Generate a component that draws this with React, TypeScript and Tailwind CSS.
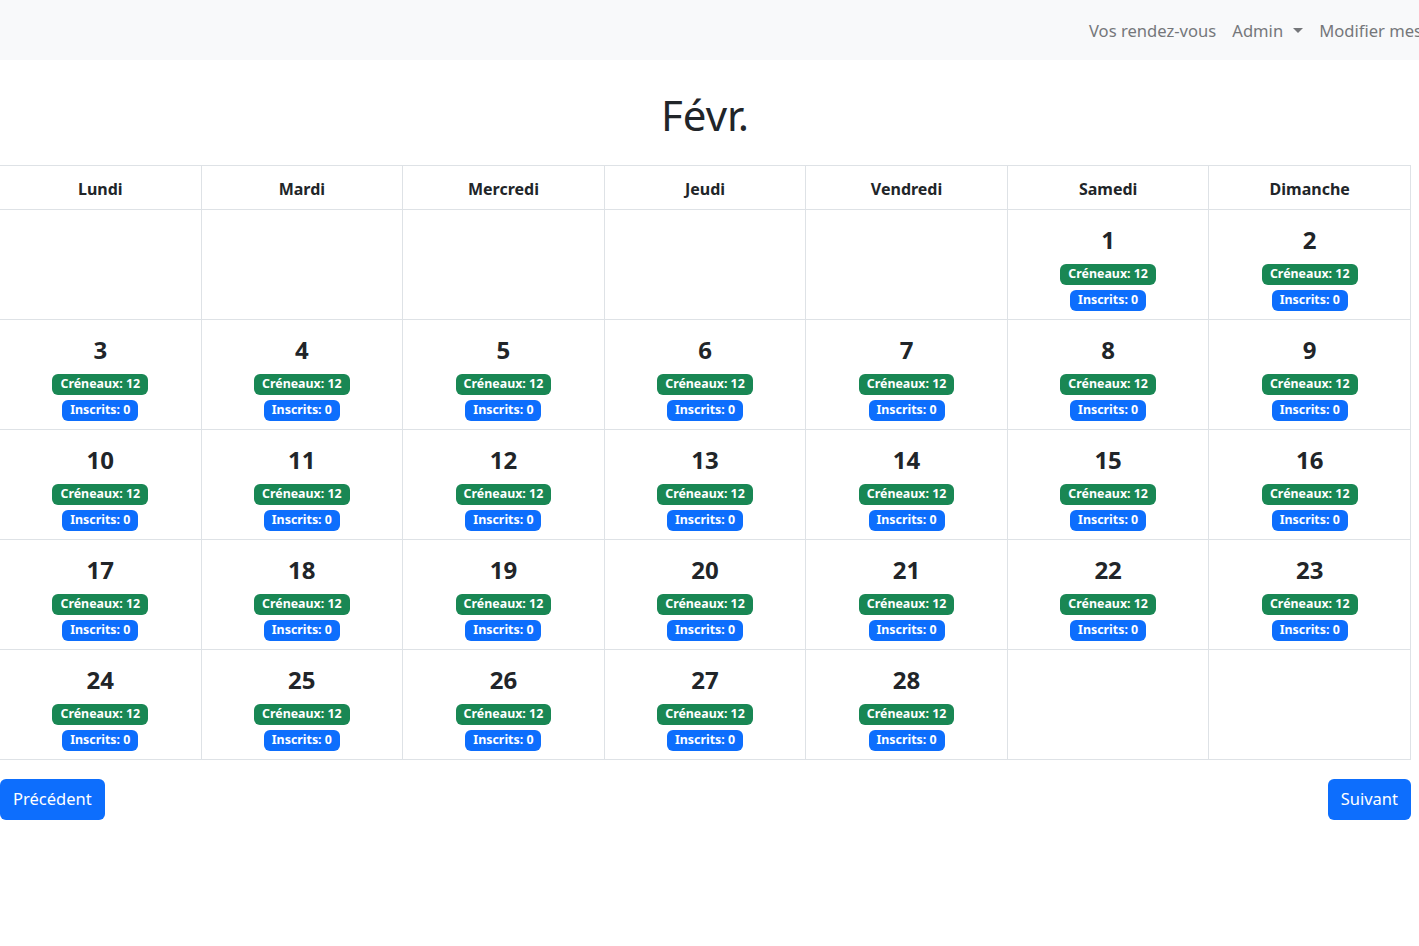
import React from "react";

const days = ["Lundi", "Mardi", "Mercredi", "Jeudi", "Vendredi", "Samedi", "Dimanche"];

function buildWeeks(): (number | null)[][] {
  const cells: (number | null)[] = [null, null, null, null, null];
  for (let d = 1; d <= 28; d++) cells.push(d);
  while (cells.length % 7 !== 0) cells.push(null);
  const weeks: (number | null)[][] = [];
  for (let i = 0; i < cells.length; i += 7) weeks.push(cells.slice(i, i + 7));
  return weeks;
}

const font = { fontFamily: '"Noto Sans", "Open Sans", "Liberation Sans", sans-serif' };

export default function App() {
  const weeks = buildWeeks();
  return (
    <div className="w-[1419px] min-h-[946px] bg-white text-[#212529] overflow-hidden" style={font}>
      <nav className="h-[60px] bg-[#f8f9fa] overflow-hidden">
        <div className="flex items-center h-full pt-[2px] ml-[1081px] whitespace-nowrap text-[16.6px] text-[#75777a]">
          <span className="px-2">Vos rendez-vous</span>
          <span className="px-2 flex items-center">
            Admin
            <span className="ml-[10px] inline-block w-0 h-0 border-l-[5px] border-r-[5px] border-t-[5px] border-l-transparent border-r-transparent border-t-[#75777a]" />
          </span>
          <span className="px-2">Modifier mes informations</span>
        </div>
      </nav>

      <div className="w-[1412px] -ml-px">
        <h1 className="text-center text-[42px] leading-[48px] font-normal pt-[31px] pb-[26px]">Févr.</h1>

        <div className="grid grid-cols-7 border-t border-l border-[#dee2e6]">
          {days.map((d) => (
            <div
              key={d}
              className="h-[44px] pt-[2px] flex items-center justify-center font-bold text-[16px] border-r border-b border-[#dee2e6]"
            >
              {d}
            </div>
          ))}
          {weeks.flat().map((n, i) => (
            <div key={i} className="h-[110px] border-r border-b border-[#dee2e6] flex flex-col items-center pt-[15px]">
              {n !== null && (
                <>
                  <div className="text-[24px] leading-[29px] font-bold">{n}</div>
                  <span className="mt-[10px] h-[21px] px-[8px] flex items-center rounded-[6px] bg-[#198754] text-white text-[12.4px] font-bold leading-none">
                    Créneaux: 12
                  </span>
                  <span className="mt-[5px] h-[21px] px-[8px] flex items-center rounded-[6px] bg-[#0d6efd] text-white text-[12.4px] font-bold leading-none">
                    Inscrits: 0
                  </span>
                </>
              )}
            </div>
          ))}
        </div>

        <div className="flex justify-between mt-[19px]">
          <button className="h-[41px] px-[13px] rounded-[6px] bg-[#0d6efd] text-white text-[16.5px] ml-px">Précédent</button>
          <button className="h-[41px] px-[13px] rounded-[6px] bg-[#0d6efd] text-white text-[16.5px]">Suivant</button>
        </div>
      </div>
    </div>
  );
}
